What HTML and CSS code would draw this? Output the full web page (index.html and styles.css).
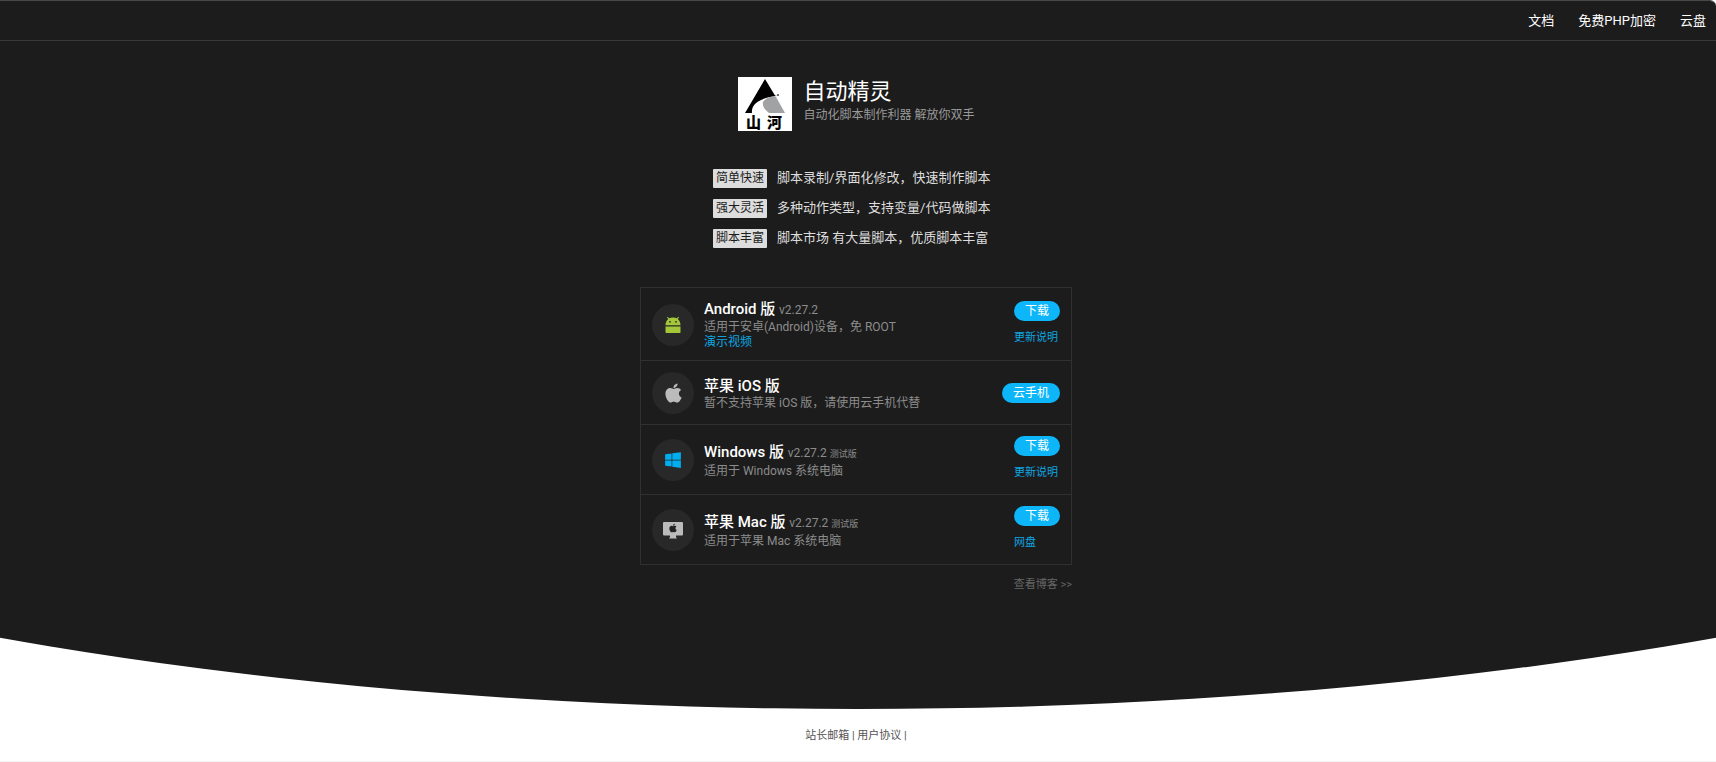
FILE: index.html
```html
<!DOCTYPE html>
<html lang="zh-CN">
<head>
<meta charset="utf-8">
<meta name="viewport" content="width=device-width, initial-scale=1">
<title>自动精灵</title>
<link rel="stylesheet" href="styles.css">
</head>
<body>
<div class="hero">
  <nav class="nav">
    <a href="#docs">文档</a>
    <a href="#php">免费PHP加密</a>
    <a href="#pan">云盘</a>
  </nav>
  <main class="main">
    <header class="brand">
      <svg class="logo" viewBox="0 0 54 54" role="img" aria-label="山河">
        <rect width="54" height="54" fill="#fff"/>
        <path d="M27 2 L7 36 H14 C13 28 20 21 39 19 L37 18.500 Z" fill="#000"/>
        <path d="M25 25 C28 20 34 19 38 20 L47 36 H31 C27 33 24 29 25 25Z" fill="#a0a2a4"/>
        <circle cx="40" cy="18" r="1" fill="#444"/>
        <text class="logo-text" x="8" y="51">山</text>
        <text class="logo-text" x="29" y="51">河</text>
      </svg>
      <div>
        <h1 class="title">自动精灵</h1>
        <p class="subtitle">自动化脚本制作利器 解放你双手</p>
      </div>
    </header>

    <ul class="features">
      <li><span class="badge">简单快速</span>脚本录制/界面化修改，快速制作脚本</li>
      <li><span class="badge">强大灵活</span>多种动作类型，支持变量/代码做脚本</li>
      <li><span class="badge">脚本丰富</span>脚本市场 有大量脚本，优质脚本丰富</li>
    </ul>

    <section class="downloads">
      <ul class="list">
        <li class="item">
          <span class="icon">
            <svg width="16" height="18" viewBox="0 0 16 18" fill="#a4c639"><path d="M.5 9.200C.5 6.500 1.500 4.200 3.200 2.900L2 1.300 2.700.7 4.100 2.200C6.500 1.200 9.500 1.200 11.900 2.200L13.300.7 14 1.300 12.800 2.900C14.500 4.200 15.500 6.500 15.500 9.200ZM.5 10.500H15.500V16.300Q15.500 17 14.800 17H1.200Q.5 17 .5 16.300Z"/><circle cx="5" cy="5.800" r=".9" fill="#2a2a2a"/><circle cx="11" cy="5.800" r=".9" fill="#2a2a2a"/></svg>
          </span>
          <div class="info">
            <h2 class="name">Android 版 <span class="version">v2.27.2</span></h2>
            <p class="desc">适用于安卓(Android)设备，免 ROOT</p>
            <a class="video" href="#video">演示视频</a>
          </div>
          <div class="actions">
            <button class="pill" type="button">下载</button>
            <a class="more" href="#android-log">更新说明</a>
          </div>
        </li>
        <li class="item">
          <span class="icon">
            <svg width="17" height="22" viewBox="0 0 384 512" fill="#bbb"><path d="M318.700 268.700c-.2-36.700 16.400-64.400 50-84.800-18.800-26.900-47.200-41.700-84.700-44.600-35.500-2.800-74.300 20.700-88.500 20.700-15 0-49.400-19.700-76.400-19.700C63.300 141.200 4 184.800 4 273.500q0 39.300 14.400 81.200c12.800 36.700 59 126.700 107.200 125.200 25.200-.6 43-17.900 75.800-17.900 31.800 0 48.300 17.900 76.400 17.900 48.600-.7 90.400-82.500 102.600-119.300-65.200-30.700-61.700-90-61.700-91.900zm-56.600-164.200c27.300-32.400 24.800-61.900 24-72.500-24.100 1.400-52 16.400-67.900 34.900-17.500 19.800-27.800 44.300-25.600 71.900 26.100 2 49.900-11.400 69.500-34.300z"/></svg>
          </span>
          <div class="info">
            <h2 class="name">苹果 iOS 版</h2>
            <p class="desc">暂不支持苹果 iOS 版，请使用云手机代替</p>
          </div>
          <div class="actions">
            <button class="pill" type="button">云手机</button>
          </div>
        </li>
        <li class="item">
          <span class="icon">
            <svg width="16" height="18" viewBox="0 0 448 512" fill="#00adef"><path d="M0 93.700l183.600-25.300v177.400H0V93.700zm0 324.600l183.600 25.300V268.400H0v149.900zm203.800 28L448 480V268.400H203.800v177.900zm0-380.600v180.100H448V32L203.800 65.700z"/></svg>
          </span>
          <div class="info">
            <h2 class="name">Windows 版 <span class="version">v2.27.2 <small>测试版</small></span></h2>
            <p class="desc">适用于 Windows 系统电脑</p>
          </div>
          <div class="actions">
            <button class="pill" type="button">下载</button>
            <a class="more" href="#windows-log">更新说明</a>
          </div>
        </li>
        <li class="item">
          <span class="icon">
            <svg width="20" height="17" viewBox="0 0 20 17" fill="#bbb"><path d="M1 0H19Q20 0 20 1V12.500Q20 13.500 19 13.500H13V15L14 16.500H6L7 15V13.500H1Q0 13.500 0 12.500V1Q0 0 1 0Z"/><svg x="6" y="1" width="8" height="10" viewBox="0 0 384 512" fill="#222"><path d="M318.700 268.700c-.2-36.700 16.400-64.400 50-84.800-18.800-26.900-47.200-41.700-84.700-44.600-35.500-2.800-74.300 20.700-88.500 20.700-15 0-49.400-19.700-76.400-19.700C63.300 141.200 4 184.800 4 273.500q0 39.300 14.400 81.200c12.800 36.700 59 126.700 107.200 125.200 25.200-.6 43-17.900 75.800-17.900 31.800 0 48.300 17.900 76.400 17.900 48.600-.7 90.400-82.500 102.600-119.300-65.200-30.700-61.700-90-61.700-91.900zm-56.600-164.200c27.300-32.400 24.800-61.900 24-72.500-24.100 1.400-52 16.400-67.900 34.900-17.500 19.800-27.800 44.300-25.600 71.900 26.100 2 49.900-11.400 69.500-34.300z"/></svg></svg>
          </span>
          <div class="info">
            <h2 class="name">苹果 Mac 版 <span class="version">v2.27.2 <small>测试版</small></span></h2>
            <p class="desc">适用于苹果 Mac 系统电脑</p>
          </div>
          <div class="actions">
            <button class="pill" type="button">下载</button>
            <a class="more" href="#mac-pan">网盘</a>
          </div>
        </li>
      </ul>
      <a class="blog" href="#blog">查看博客 &gt;&gt;</a>
    </section>
  </main>
</div>
<footer class="footer">
  <a href="#mail">站长邮箱</a> | <a href="#terms">用户协议</a> |
</footer>
</body>
</html>
```
FILE: styles.css
```css
* {
  box-sizing: border-box;
  margin: 0;
  padding: 0;
}

body {
  min-height: 100vh;
  display: flex;
  flex-direction: column;
  background: #fff;
  border-bottom: 1px solid #f2f2f2;
  font-family: Roboto, "Noto Sans CJK SC", sans-serif;
  font-size: 12px;
  overflow-x: hidden;
}

a {
  color: inherit;
  text-decoration: none;
}

ul {
  list-style: none;
}

.hero {
  position: relative;
  overflow: hidden;
  border-top: 1px solid #484848;
  border-top-right-radius: 6px;
  padding-bottom: 116px;
}

/* wide dark backdrop with a curved lower edge */
.hero::before {
  content: "";
  position: absolute;
  z-index: -1;
  top: 0;
  bottom: 0;
  left: -50%;
  width: 200%;
  background: #1c1c1c;
  border-radius: 0 0 50% 50% / 0 0 75% 75%;
}

.nav {
  display: flex;
  justify-content: flex-end;
  gap: 24px;
  height: 40px;
  padding-right: 10px;
  border-bottom: 1px solid #383838;
  color: #fff;
  font-size: 13px;
  line-height: 39px;
}

.main {
  display: flex;
  flex-direction: column;
  align-items: center;
  padding: 36px 4px 0 0;
}

.brand {
  display: flex;
  gap: 12px;
}

.logo {
  width: 54px;
  height: 54px;
}

.logo-text {
  font-family: "Noto Sans CJK SC", sans-serif;
  font-size: 15px;
  font-weight: 900;
}

.title {
  color: #fff;
  font-size: 22px;
  font-weight: 400;
  line-height: 30px;
}

.subtitle {
  color: #999;
  line-height: 16px;
}

.features {
  display: grid;
  gap: 10px;
  width: 286px;
  max-width: 100%;
  margin-top: 37px;
  color: #ddd;
  font-size: 13px;
  line-height: 20px;
}

.features li {
  display: flex;
  align-items: center;
  gap: 10px;
}

.badge {
  padding: 0 3px;
  border-radius: 1px;
  background: #ddd;
  color: #1c1c1c;
  font-size: 12px;
  line-height: 19px;
}

.downloads {
  width: 432px;
  max-width: 100%;
  margin-top: 39px;
  text-align: right;
}

.list {
  border: 1px solid #303030;
  border-bottom: 0;
  text-align: left;
}

.item {
  display: flex;
  align-items: center;
  gap: 10px;
  padding: 11px 11px 10px;
  border-bottom: 1px solid #303030;
}

.icon {
  display: flex;
  align-items: center;
  justify-content: center;
  width: 42px;
  height: 42px;
  border-radius: 50%;
  background: #282828;
}

.info {
  flex: 1;
}

.name {
  color: #fff;
  font-size: 15px;
  font-weight: 500;
  line-height: 20px;
}

.version {
  color: #8c8c8c;
  font-size: 12px;
  font-weight: 400;
}

.version small {
  font-size: 9px;
}

.desc {
  color: #8c8c8c;
  line-height: 15px;
}

.video {
  display: block;
  color: #0ea5e0;
  line-height: 15px;
}

.actions {
  display: grid;
  gap: 6px;
}

.pill {
  height: 20px;
  padding: 0 11px;
  border: 0;
  border-radius: 10px;
  background: #0cb6f8;
  color: #fff;
  font: inherit;
  line-height: 20px;
  cursor: pointer;
}

.more {
  color: #0ea5e0;
  font-size: 11px;
  line-height: 22px;
}

.blog {
  display: inline-block;
  margin-top: 12px;
  color: #666;
  font-size: 11px;
  line-height: 16px;
}

.footer {
  padding: 19px 4px 0 0;
  color: #555;
  font-size: 11px;
  line-height: 16px;
  text-align: center;
}
```
